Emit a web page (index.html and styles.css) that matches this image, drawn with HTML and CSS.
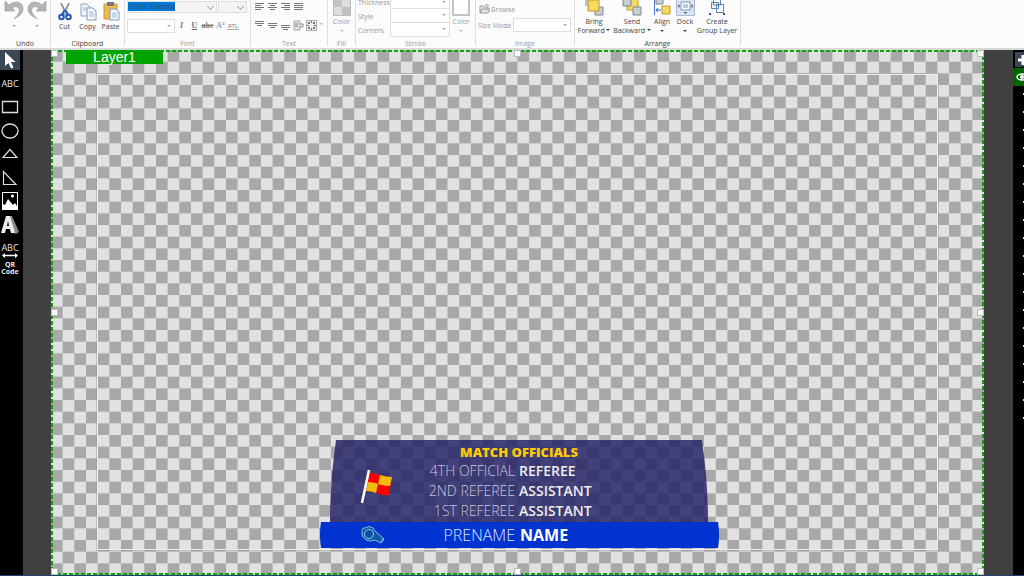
FILE: index.html
```html
<!DOCTYPE html>
<html lang="en">
<head>
<meta charset="utf-8">
<title>Title Designer</title>
<link rel="stylesheet" href="styles.css">
</head>
<body>
<div class="app">
<header class="ribbon">
  <section class="group g-undo">
    <div class="body tools">
      <button class="tool" aria-label="Undo"><svg width="20" height="20" viewBox="0 0 20 20"><path d="M1 1v10h10L8 8q4-3 7 0 2 4-5 11 10-5 9-11-1-6-7-6-4 0-7 3z" fill="#b4b4b4" stroke="#999" stroke-width=".6"/></svg><i class="caret"></i></button>
      <button class="tool" aria-label="Redo"><svg width="20" height="20" viewBox="0 0 20 20"><path d="M19 1v10H9l3-3q-4-3-7 0-2 4 5 11Q0 14 1 8q1-6 7-6 4 0 7 3z" fill="#b4b4b4" stroke="#999" stroke-width=".6"/></svg><i class="caret"></i></button>
    </div>
    <h2>Undo</h2>
  </section>
  <section class="group g-clip">
    <div class="body tools">
      <button class="tool"><svg width="20" height="20" viewBox="0 0 20 20"><path d="M5 2l2 0 6 12-2 1zM15 2l-2 0-6 12 2 1z" fill="#8a97a8"/><path d="M10 9l3 4M10 9l-3 4" stroke="#2457b8" stroke-width="2"/><circle cx="6.500" cy="16" r="2.300" fill="none" stroke="#2457b8" stroke-width="2"/><circle cx="13.500" cy="16" r="2.300" fill="none" stroke="#2457b8" stroke-width="2"/></svg><span>Cut</span></button>
      <button class="tool"><svg width="20" height="20" viewBox="0 0 20 20"><path d="M3 3h6l3 3v9H3z" fill="#eef4fb" stroke="#8ca4c0"/><path d="M9 7h6l3 3v9H9z" fill="#f5f9fd" stroke="#7f9abb"/><path d="M5 7h4M5 9h3M11 11h4M11 13h5M11 15h5" stroke="#9db8d6"/></svg><span>Copy</span></button>
      <button class="tool"><svg width="20" height="20" viewBox="0 0 20 20"><path d="M3 3h13v15H3z" fill="#edba55" stroke="#c99842"/><path d="M6 1h7v4H6z" fill="#777"/><path d="M9 8h6l3 3v8H9z" fill="#f3f8fd" stroke="#7f9abb"/><path d="M11 12h5M11 14h5M11 16h5" stroke="#9db8d6"/></svg><span>Paste</span></button>
    </div>
    <h2>Clipboard</h2>
  </section>
  <section class="group g-font off">
    <div class="body">
      <div class="row fonts">
        <label class="combo name"><input aria-label="Font name" value="11S01 Tuesday"></label>
        <label class="combo size"><select aria-label="Font size"><option></option></select></label>
      </div>
      <div class="row styles">
        <label class="drop face"><select aria-label="Font style"><option></option></select></label>
        <button class="fmt"><em>I</em></button><button class="fmt"><u>U</u></button><button class="fmt strike">abc</button><button class="fmt light">A<sup>a</sup></button><button class="fmt rtl">RTL</button>
      </div>
    </div>
    <h2>Font</h2>
  </section>
  <section class="group g-text off">
    <div class="body aligns">
      <button aria-label="Left"><svg width="9" height="8" viewBox="0 0 9 8"><path d="M0 .5h9M0 2.500h6M0 4.500h9M0 6.500h6" stroke="#777"/></svg></button>
      <button aria-label="Center"><svg width="9" height="8" viewBox="0 0 9 8"><path d="M0 .5h9M2 2.500h5M0 4.500h9M2 6.500h5" stroke="#777"/></svg></button>
      <button aria-label="Right"><svg width="9" height="8" viewBox="0 0 9 8"><path d="M0 .5h9M3 2.500h6M0 4.500h9M3 6.500h6" stroke="#777"/></svg></button>
      <button aria-label="Justify"><svg width="9" height="8" viewBox="0 0 9 8"><path d="M0 .5h9M0 2.500h9M0 4.500h9M0 6.500h9" stroke="#777"/></svg></button>
      <span></span><span></span>
      <button aria-label="Top"><svg width="9" height="11" viewBox="0 0 9 11"><path d="M0 1.500h9M0 3.500h9M2 5.500h5" stroke="#777"/></svg></button>
      <button aria-label="Middle"><svg width="9" height="11" viewBox="0 0 9 11"><path d="M0 3.500h9M0 5.500h9M2 7.500h5" stroke="#777"/></svg></button>
      <button aria-label="Bottom"><svg width="9" height="11" viewBox="0 0 9 11"><path d="M0 5.500h9M0 7.500h9M2 9.500h5" stroke="#777"/></svg></button>
      <button aria-label="Wrap"><svg width="11" height="11" viewBox="0 0 11 11"><path d="M1 1h6v9H1z" fill="#ddd" stroke="#aaa"/><path d="M2 4h3M2 6h3M7 4h3v3H7" stroke="#888" fill="none"/></svg></button>
      <button aria-label="Fit"><svg width="11" height="11" viewBox="0 0 11 11"><path d="M.5.5h10v10H.5z" fill="#eee" stroke="#aaa"/><path d="M2 2h2v2H2zM7 2h2v2H7zM2 7h2v2H2zM7 7h2v2H7zM5 1h1v2H5zM5 8h1v2H5zM1 5h2v1H1zM8 5h2v1H8z" fill="#777"/></svg></button>
      <i class="caret"></i>
    </div>
    <h2>Text</h2>
  </section>
  <section class="group g-fill off">
    <div class="body tools clipped">
      <button class="tool"><svg width="18" height="18" viewBox="0 0 18 18"><path d="M0 0h18v18H0z" fill="#dedede"/><path d="M0 0h9v9H0zM9 9h9v9H9z" fill="#c2c2c2"/><path d="M.5 0v17.500h17V0" fill="none" stroke="#bbb"/></svg><span>Color</span><i class="caret"></i></button>
    </div>
    <h2>Fill</h2>
  </section>
  <section class="group g-stroke off">
    <div class="body stroke">
      <div class="fields">
        <label for="th">Thickness</label><span class="drop"><select id="th"><option></option></select></span>
        <label for="st">Style</label><span class="drop"><select id="st"><option></option></select></span>
        <label for="co">Corners</label><span class="drop"><select id="co"><option></option></select></span>
      </div>
      <div class="tools clipped"><button class="tool"><svg width="18" height="18" viewBox="0 0 18 18"><path d="M1 0v17h16V0" fill="#fff" stroke="#c4c4c4" stroke-width="2"/></svg><span>Color</span><i class="caret"></i></button></div>
    </div>
    <h2>Stroke</h2>
  </section>
  <section class="group g-image off">
    <div class="body">
      <button class="browse"><svg width="11" height="10" viewBox="0 0 11 10"><path d="M1 9V2h3l1 1h4v2M1 9l2-4h8L9 9zM6 1q3-1 4 1" fill="#e4e4e4" stroke="#999"/></svg>Browse</button>
      <div class="row mode"><label for="sm">Size Mode</label><span class="drop"><select id="sm"><option></option></select></span></div>
    </div>
    <h2>Image</h2>
  </section>
  <section class="group g-arrange">
    <div class="body tools clipped">
      <button class="tool b1"><svg width="20" height="18" viewBox="0 0 20 18"><path d="M1 0h8v8H1z" fill="#bfc5cb"/><path d="M11 9h8v8h-8z" fill="#c9ced3" stroke="#7f868d"/><path d="M4 2h11v11H4z" fill="#f8d95c" stroke="#b99a35"/></svg><span>Bring<br>Forward <i class="caret in"></i></span></button>
      <button class="tool b2"><svg width="20" height="18" viewBox="0 0 20 18"><path d="M5 1h11v11H5z" fill="#f8d95c" stroke="#b99a35"/><path d="M1 0h8v8H1zM11 9h8v8h-8z" fill="#c9ced3" stroke="#7f868d"/></svg><span>Send<br>Backward <i class="caret in"></i></span></button>
      <button class="tool b3"><svg width="18" height="18" viewBox="0 0 18 18"><path d="M1.500 0v17" stroke="#4a78c4"/><path d="M3 0h7v6H3z" fill="#c9ced3" stroke="#7f868d"/><path d="M9 8h8v8H9z" fill="#f8d95c" stroke="#b99a35"/><path d="M8 12H3M5 10l-2 2 2 2" stroke="#2d64c8" fill="none"/></svg><span>Align</span><i class="caret"></i></button>
      <button class="tool b4"><svg width="19" height="18" viewBox="0 0 19 18"><path d="M.5 0v17.500h18V0" fill="#dce5f0" stroke="#a9bad0"/><path d="M5 4h9v8H5z" fill="#fff" stroke="#7892b5"/><path d="M7 7h5M7 9h5" stroke="#6b93cc"/><path d="M9.500 0l2 2h-4zM9.500 16l2-2h-4zM1.500 8l2-2v4zM17.500 8l-2-2v4z" fill="#3c5f94"/></svg><span>Dock</span><i class="caret"></i></button>
      <button class="tool b5"><svg width="18" height="18" viewBox="0 0 18 18"><path d="M5.500 0h7v7h-7zM8.500 6.500h7v8h-7zM3.500 4.500h7v6h-7z" fill="none" stroke="#5c81b8"/><path d="M1 0h2v2H1zM15 0h2v2h-2zM1 15h2v2H1zM15 15h2v2h-2z" fill="#2d528f"/></svg><span>Create<br>Group Layer</span></button>
    </div>
    <h2>Arrange</h2>
  </section>
</header>
<main class="work">
  <nav class="toolbar">
    <button class="on" aria-label="Select"><svg width="20" height="20" viewBox="0 0 20 20"><path d="M5 2v14l3.500-3 2.500 5.500 2.500-1L11 12h4.500z" fill="#fff"/></svg></button>
    <button class="abc">ABC</button>
    <button aria-label="Rectangle"><svg width="20" height="20" viewBox="0 0 20 20"><path d="M2.500 4.500h15v11h-15z" fill="none" stroke="#ddd" stroke-width="1.300"/></svg></button>
    <button aria-label="Ellipse"><svg width="20" height="20" viewBox="0 0 20 20"><ellipse cx="10" cy="10" rx="8" ry="7" fill="none" stroke="#ddd" stroke-width="1.300"/></svg></button>
    <button aria-label="Triangle"><svg width="20" height="20" viewBox="0 0 20 20"><path d="M10 5.500l7 8H3z" fill="none" stroke="#ddd" stroke-width="1.200"/></svg></button>
    <button aria-label="Right triangle"><svg width="20" height="20" viewBox="0 0 20 20"><path d="M3.500 3.500v13h12.500z" fill="none" stroke="#ddd" stroke-width="1.200"/></svg></button>
    <button aria-label="Picture"><svg width="20" height="20" viewBox="0 0 20 20"><path d="M2 1h16v18H2z" fill="#fff"/><path d="M3 2h14v13l-2-3-2 2-5-6-3 6-2-1z" fill="#000"/><circle cx="12.500" cy="5" r="1.600" fill="#fff"/></svg></button>
    <button aria-label="3D text"><svg width="20" height="20" viewBox="0 0 20 20"><path d="M8 1h4l7 16-3 2-5-3z" fill="#888"/><path fill-rule="evenodd" d="M6 1h4l5 17h-4l-1-4H6l-1 4H1zM8 6l-1 5h2z" fill="#eee"/></svg></button>
    <button class="abc wide">ABC<svg width="16" height="5" viewBox="0 0 16 5"><path d="M1 2.500h14" stroke="#fff" stroke-width="1.500"/><path d="M0 2.500L3 0v5zM16 2.500L13 0v5z" fill="#fff"/></svg></button>
    <button class="qr">QR<br>Code</button>
  </nav>
  <section class="stage">
    <svg class="checker" viewBox="0 0 800 450" preserveAspectRatio="none">
      <defs><pattern id="ck" width="20" height="20" patternUnits="userSpaceOnUse"><path d="M0 0h20v20H0z" fill="#e1e1e1"/><path d="M0 0h10v10H0zM10 10h10v10H10z" fill="#a8a8a8"/></pattern></defs>
      <path d="M0 0h800v450H0z" fill="url(#ck)"/>
    </svg>
    <div class="safe"></div>
    <svg class="outline"><rect x="1" y="1" width="100%" height="100%"/></svg>
    <div class="layer">Layer1</div>
    <i class="h nw"></i><i class="h n"></i><i class="h ne"></i><i class="h w"></i><i class="h e"></i><i class="h sw"></i><i class="h s"></i><i class="h se"></i>
    <div class="title">
      <div class="panel">
        <svg class="shape" viewBox="0 0 378 82" preserveAspectRatio="none"><path d="M6 0H372Q378 42 378 82H0Q0 42 6 0z" fill="#252366" fill-opacity=".84"/></svg>
        <svg class="flag" width="34" height="36" viewBox="0 0 34 36"><path d="M9 4q6 0 11 2t12 2l-3 18q-7 1-12-2-6-2-11-2z" fill="#f00"/><path d="M20 6q6 2 12 2l-2 9q-6 0-12-2zM8 13q5 0 10 2l-2 9q-5-2-10-2z" fill="#efbd10"/><path d="M9 1L2 34" stroke="#fff" stroke-width="2.500"/></svg>
        <h1>MATCH OFFICIALS</h1>
        <dl>
          <dt>4TH OFFICIAL</dt><dd>REFEREE</dd>
          <dt>2ND REFEREE</dt><dd>ASSISTANT</dd>
          <dt>1ST REFEREE</dt><dd>ASSISTANT</dd>
        </dl>
      </div>
      <div class="bar">
        <svg class="shape" viewBox="0 0 399 26" preserveAspectRatio="none"><path d="M1 0H398Q400 13 398 26H1Q-1 13 1 0z" fill="#0033cf"/></svg>
        <svg class="whistle" width="24" height="18" viewBox="0 0 24 18"><path d="M1 4q1-3 3-2 4-3 8 0l2 3 9 8-3 4-6-3q-5 2-9 0-4-3-4-6z" fill="#0a58a8" stroke="#8fbbe8"/><circle cx="8" cy="8" r="4.500" fill="#0750a5" stroke="#a5c9ec"/><path d="M20 16l3-4" stroke="#a5c9ec"/></svg>
        <p class="pre">PRENAME</p><p class="nm">NAME</p>
      </div>
    </div>
  </section>
  <aside class="layers">
    <button class="add" aria-label="Add layer"><svg width="10" height="15"><path d="M3 8h10M8 3v10" stroke="#fff" stroke-width="3"/></svg></button>
    <button class="eye" aria-label="Visibility"><svg width="11" height="18"><ellipse cx="9" cy="9" rx="5" ry="3" fill="none" stroke="#fff" stroke-width="1.500"/><circle cx="9" cy="9" r="2" fill="#fff"/></svg></button>
    <ul><li></li><li></li><li></li><li></li><li></li><li></li><li></li><li></li><li></li><li></li><li></li><li></li><li></li><li></li><li></li><li></li><li></li><li></li><li></li></ul>
  </aside>
</main>
</div>
</body>
</html>
```
FILE: styles.css
```css
* { box-sizing: border-box; }
body { margin: 0; font: 7px/9px "Open Sans", "Noto Sans", sans-serif; color: #444; overflow: hidden; }
button, select, input { font: inherit; color: inherit; border: 0; background: none; padding: 0; margin: 0; }
h1, h2, p, dl, dd, ul { margin: 0; padding: 0; }
svg { display: block; flex: none; }
.app { height: 100vh; display: flex; flex-direction: column; border-bottom: 1px solid #1f3f70; }

.ribbon { display: flex; height: 50px; flex: none; background: #fcfcfc; border-bottom: 2px solid #d9d9d9; overflow: hidden; }
.group { display: flex; flex-direction: column; flex: none; border-right: 1px solid #dedede; height: 46px; }
.group h2 { font-size: 7px; font-weight: 400; text-align: center; line-height: 9px; }
.off { color: #999; }
.body { flex: none; height: 39px; }
.g-undo { width: 51px; }
.g-clip { width: 74px; }
.g-font { width: 126px; }
.g-text { width: 77px; }
.g-fill { width: 28px; }
.g-stroke { width: 120px; }
.g-image { width: 99px; }
.g-arrange { width: 166px; }
.tools { display: flex; justify-content: center; gap: 3px; }
.tool { display: flex; flex-direction: column; align-items: center; justify-content: flex-start; gap: 2px; white-space: nowrap; }
.clipped { margin-top: -2px; height: 41px; }
.clipped .tool { gap: 1px; }
.caret { display: block; margin: 3px auto; border: 2px solid transparent; border-top-color: currentColor; border-bottom: 0; width: 0; height: 0; }
.caret.in { display: inline-block; margin: 1px 0 2px; }
.g-undo .caret { color: #aaa; }
.off .caret { color: #bbb; }
.g-clip .tools { gap: 5px; padding-top: 1px; }
.g-clip .tool { width: 18px; gap: 1px; }

.row { display: flex; align-items: center; }
.fonts { gap: 1px; padding: 1px 0 0 2px; }
.combo, .drop { position: relative; display: block; border: 1px solid #ddd; background: #fff; }
.combo { background: #f4f4f4; height: 12px; }
.combo::after { content: ""; position: absolute; right: 3px; top: 2px; width: 4px; height: 4px; border: solid #aaa; border-width: 0 1px 1px 0; transform: rotate(45deg); }
.combo.name { width: 90px; }
.combo.size { width: 29px; }
.combo input { display: block; width: 47px; height: 9px; background: #0078d7; color: #34536f; }
.drop { height: 14px; }
.drop::after { content: ""; position: absolute; right: 3px; top: 5px; border: 2px solid transparent; border-top-color: #aaa; border-bottom: 0; }
select { appearance: none; display: block; width: 100%; height: 100%; }
.styles { padding: 6px 0 0 2px; }
.face { width: 48px; }
.fmt { width: 13px; text-align: center; font: bold 8px/10px "Liberation Serif", serif; color: #777; }
.fmt sup { font-size: 6px; line-height: 5px; vertical-align: 3px; }
.fmt.light { font-weight: 400; }
.fmt.strike { text-decoration: line-through; }
.fmt.rtl { font: 6px/6px "Open Sans", sans-serif; border-bottom: 1px solid #aaa; width: 12px; }
.aligns { display: grid; grid-template-columns: repeat(5, 13px) 6px; grid-template-rows: 8px 11px; row-gap: 9px; padding: 3px 0 0 2px; align-content: start; justify-items: center; }
.stroke { display: flex; gap: 2px; }
.fields { display: grid; grid-template-columns: 32px 60px; grid-auto-rows: 14px; align-items: center; padding-left: 2px; margin-top: -5px; height: 42px; }
.fields .drop + label + .drop { border-top: 0; }
.browse { display: flex; align-items: center; gap: 1px; padding: 4px 0 0 3px; }
.mode { padding: 4px 3px 0 2px; gap: 2px; }
.mode .drop { flex: 1; }
.g-arrange .tools { gap: 2px; justify-content: flex-start; padding-left: 1px; }
.b1 { width: 36px; }
.b2 { width: 36px; }
.b3 { width: 20px; }
.b4 { width: 22px; }
.b5 { width: 38px; }

.work { flex: 1; min-height: 0; display: flex; background: #404040; }
.toolbar { width: 23px; background: #000; display: flex; flex-direction: column; align-items: flex-start; gap: 3px; margin-right: 28px; }
.toolbar button { width: 20px; height: 20px; color: #e8e8e8; display: grid; place-items: center; flex: none; }
.toolbar button:nth-child(even) { height: 21px; }
.toolbar .on { background: #3c4756; }
.toolbar .abc { font: 9px/9px "Open Sans", sans-serif; }
.toolbar .wide { align-content: end; line-height: 10px; }
.toolbar .qr { font: bold 7px/7px "Open Sans", sans-serif; align-content: start; }

.stage { position: relative; flex: 1; overflow: hidden; }
.checker, .shape { position: absolute; inset: 0; width: 100%; height: 100%; }
.safe { position: absolute; inset: 24px 46px 25px 46px; border: 1px solid #eee; outline: 1px solid rgba(150, 150, 150, .45); }
.outline { position: absolute; inset: 0; width: calc(100% - 2px); height: calc(100% - 2px); overflow: visible; }
.outline rect { fill: none; stroke: #0aa50a; stroke-width: 2; stroke-dasharray: 4 2; }
.layer { position: absolute; left: 15px; top: 0; width: 97px; height: 14px; background: #00a400; color: #fff; text-align: center; font: 14px/15px "Liberation Sans", sans-serif; }
.h { position: absolute; width: 7px; height: 7px; background: #fff; border: 1px solid #bbb; }
.nw, .n, .ne { top: 0; }
.w, .e { top: calc(50% - 4px); }
.sw, .s, .se { bottom: 0; }
.nw, .w, .sw { left: 0; }
.n, .s { left: calc(50% - 4px); }
.ne, .e, .se { right: 0; }

.title { position: absolute; left: 269px; bottom: 27px; width: 399px; font-family: "Open Sans", sans-serif; color: #fff; }
.panel { position: relative; margin: 0 11px 0 10px; height: 82px; padding-top: 3px; }
.panel > *, .bar > * { position: relative; }
.panel > .shape, .bar > .shape { position: absolute; }
.panel h1 { font-size: 13px; line-height: 18px; font-weight: 800; text-align: center; color: #fc0; }
.panel .flag { position: absolute; left: 30px; top: 29px; }
dl { display: grid; grid-template-columns: 185px 1fr; column-gap: 4px; font-size: 14px; line-height: 20px; }
dt { text-align: right; font-weight: 300; color: #c9c8dc; }
dd { font-weight: 600; color: #eee; }
.bar { position: relative; height: 26px; display: grid; grid-template-columns: 195px 1fr; column-gap: 5px; font-size: 16px; line-height: 26px; }
.pre { text-align: right; font-weight: 300; color: #dde6ff; }
.nm { font-weight: 700; }
.bar .whistle { position: absolute; left: 41px; top: 4px; }

.layers { width: 11px; margin-left: 29px; background: #000; overflow: hidden; }
.layers button { display: block; }
.add { margin: 2px 0 1px 2px; background: #3c4756; height: 15px; }
.eye { background: #006400; height: 18px; }
ul { list-style: none; }
li { height: 18px; padding: 7px 0 0 10px; }
li::before { content: ""; display: block; width: 2px; height: 2px; background: #ddd; }
```
